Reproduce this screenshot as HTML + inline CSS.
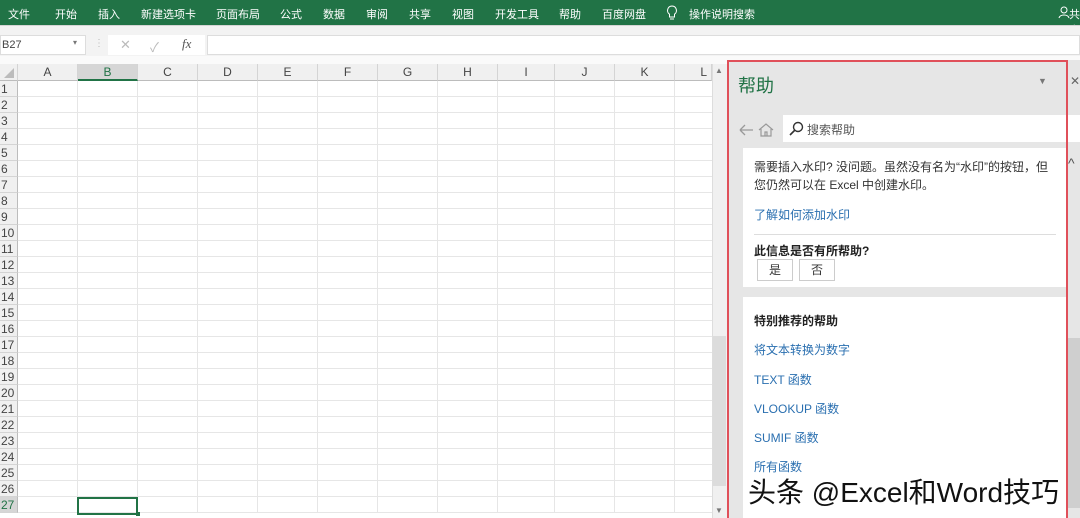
<!DOCTYPE html>
<html><head><meta charset="utf-8"><style>
*{margin:0;padding:0;box-sizing:border-box}
body{width:1080px;height:518px;overflow:hidden;background:#fff;font-family:"Liberation Sans","Noto Sans CJK SC",sans-serif;position:relative}
.abs{position:absolute}
#rib{left:0;top:0;width:1080px;height:25px;background:#217346;color:#fff;font-size:11px}
#rib span{position:absolute;top:6px}
#bar{left:0;top:25px;width:1080px;height:39px;background:#f3f3f3;border-top:1px solid #d5d5d5}
.t{font-size:11px;color:#444}
.ch{position:absolute;top:64px;height:17px;background:#f0f0f0;border-right:1px solid #d4d4d4;border-bottom:1px solid #bcbcbc;font-size:12px;color:#444;text-align:center;line-height:17px}
.rh{position:absolute;left:0;width:18px;height:16px;background:#f0f0f0;border-bottom:1px solid #d4d4d4;border-right:1px solid #bcbcbc;font-size:12px;color:#444;line-height:16px;padding-left:1px}
.cg{position:absolute;top:81px;height:432px;width:1px;background:#e6e6e6}
.rg{position:absolute;left:18px;width:694px;height:1px;background:#e6e6e6}
.lk{position:absolute;left:754px;color:#2a6fb0;font-size:12px}
</style></head><body>
<div id="rib" class="abs">
<span style="left:8px">文件</span><span style="left:55px">开始</span><span style="left:98px">插入</span><span style="left:141px">新建选项卡</span><span style="left:216px">页面布局</span><span style="left:280px">公式</span><span style="left:323px">数据</span><span style="left:366px">审阅</span><span style="left:409px">共享</span><span style="left:452px">视图</span><span style="left:495px">开发工具</span><span style="left:559px">帮助</span><span style="left:602px">百度网盘</span>
<svg class="abs" style="left:666px;top:5px" width="12" height="16"><path d="M6 1a4.5 4.5 0 0 0-2.5 8.2V12h5V9.2A4.5 4.5 0 0 0 6 1zM4 14h4" fill="none" stroke="#fff" stroke-width="1"/></svg>
<span style="left:689px">操作说明搜索</span>
<svg class="abs" style="left:1058px;top:6px" width="12" height="13"><circle cx="6" cy="4" r="3" fill="none" stroke="#fff"/><path d="M1 12c1-4 9-4 10 0" fill="none" stroke="#fff"/></svg>
<span style="left:1069px">共享</span>
</div>
<div id="bar" class="abs"></div>
<div class="abs" style="left:0;top:35px;width:86px;height:20px;background:#fff;border:1px solid #ddd"></div>
<div class="abs t" style="left:2px;top:39px">B27</div>
<div class="abs" style="left:73px;top:38px;font-size:8px;color:#777">▾</div>
<div class="abs" style="left:94px;top:38px;font-size:10px;color:#bbb">⋮</div>
<div class="abs" style="left:108px;top:35px;width:97px;height:20px;background:#fff"></div>
<div class="abs" style="left:120px;top:37px;font-size:13px;color:#bbb">✕</div>
<div class="abs" style="left:150px;top:37px;font-size:13px;color:#bbb">✓</div>
<div class="abs" style="left:182px;top:36px;font-size:13px;color:#555;font-style:italic;font-family:'Liberation Serif',serif">fx</div>
<div class="abs" style="left:207px;top:35px;width:873px;height:20px;background:#fff;border:1px solid #ddd"></div>
<div class="abs" style="left:0;top:56px;width:1080px;height:8px;background:#fafafa"></div>
<div class="ch" style="left:0;width:18px"><svg width="14" height="14" style="margin-top:2px"><path d="M12 2V12H2Z" fill="#bcbcbc"/></svg></div>
<div class="ch" style="left:18px;width:60px">A</div>
<div class="ch" style="left:78px;width:60px;background:#d6d6d6;border-bottom:2px solid #217346;color:#217346">B</div>
<div class="ch" style="left:138px;width:60px">C</div>
<div class="ch" style="left:198px;width:60px">D</div>
<div class="ch" style="left:258px;width:60px">E</div>
<div class="ch" style="left:318px;width:60px">F</div>
<div class="ch" style="left:378px;width:60px">G</div>
<div class="ch" style="left:438px;width:60px">H</div>
<div class="ch" style="left:498px;width:57px">I</div>
<div class="ch" style="left:555px;width:60px">J</div>
<div class="ch" style="left:615px;width:60px">K</div>
<div class="ch" style="left:675px;width:37px;text-align:right;padding-right:4px">L</div>
<div class="cg" style="left:77px"></div><div class="cg" style="left:137px"></div><div class="cg" style="left:197px"></div><div class="cg" style="left:257px"></div><div class="cg" style="left:317px"></div><div class="cg" style="left:377px"></div><div class="cg" style="left:437px"></div><div class="cg" style="left:497px"></div><div class="cg" style="left:554px"></div><div class="cg" style="left:614px"></div><div class="cg" style="left:674px"></div>
<div id="rows"></div>
<div class="abs" style="left:77px;top:497px;width:61px;height:18px;border:2px solid #217346"></div>
<div class="abs" style="left:136px;top:512px;width:4px;height:4px;background:#217346"></div>
<div class="abs" style="left:712px;top:64px;width:15px;height:454px;background:#f0f0f0;border-left:1px solid #ddd"></div>
<div class="abs" style="left:715px;top:66px;font-size:8px;color:#777">▲</div>
<div class="abs" style="left:713px;top:336px;width:13px;height:150px;background:#dcdcdc"></div>
<div class="abs" style="left:715px;top:506px;font-size:8px;color:#777">▼</div>
<div class="abs" style="left:727px;top:60px;width:353px;height:458px;background:#e6e6e6"></div>
<div class="abs" style="left:1068px;top:338px;width:12px;height:170px;background:#cfcfcf"></div>
<div class="abs" style="left:1068px;top:155px;font-size:14px;color:#555">^</div>
<div class="abs" style="left:1070px;top:74px;font-size:12px;color:#666">✕</div>
<div class="abs" style="left:738px;top:72px;font-size:18px;color:#217346">帮助</div>
<div class="abs" style="left:1038px;top:76px;font-size:9px;color:#777">▼</div>
<svg class="abs" style="left:738px;top:121px" width="38" height="18"><path d="M2 9H15M2 9l5-5M2 9l5 5" fill="none" stroke="#999" stroke-width="1.3"/><path d="M21 9l7-6 7 6M23 8v7h10V8M27 15v-4h2v4" fill="none" stroke="#999" stroke-width="1.2"/></svg>
<div class="abs" style="left:783px;top:115px;width:297px;height:27px;background:#fff"></div>
<svg class="abs" style="left:788px;top:121px" width="16" height="16"><circle cx="10" cy="6" r="4.5" fill="none" stroke="#333" stroke-width="1.4"/><path d="M7 9L2 14" stroke="#333" stroke-width="1.6"/></svg>
<div class="abs" style="left:807px;top:121px;font-size:12px;color:#555">搜索帮助</div>
<div class="abs" style="left:743px;top:148px;width:323px;height:139px;background:#fff"></div>
<div class="abs" style="left:754px;top:158px;font-size:12px;color:#333;line-height:18px;width:305px">需要插入水印? 没问题。虽然没有名为“水印”的按钮，但您仍然可以在 Excel 中创建水印。</div>
<div class="lk" style="top:206px">了解如何添加水印</div>
<div class="abs" style="left:754px;top:234px;width:302px;height:1px;background:#ddd"></div>
<div class="abs" style="left:754px;top:242px;font-size:12px;font-weight:bold;color:#222">此信息是否有所帮助?</div>
<div class="abs" style="left:757px;top:259px;width:36px;height:22px;border:1px solid #ccc;text-align:center;font-size:12px;line-height:20px;color:#333">是</div>
<div class="abs" style="left:799px;top:259px;width:36px;height:22px;border:1px solid #ccc;text-align:center;font-size:12px;line-height:20px;color:#333">否</div>
<div class="abs" style="left:743px;top:297px;width:323px;height:221px;background:#fff"></div>
<div class="abs" style="left:754px;top:312px;font-size:12px;font-weight:bold;color:#222">特别推荐的帮助</div>
<div class="lk" style="top:341px">将文本转换为数字</div>
<div class="lk" style="top:371px">TEXT 函数</div>
<div class="lk" style="top:400px">VLOOKUP 函数</div>
<div class="lk" style="top:429px">SUMIF 函数</div>
<div class="lk" style="top:458px">所有函数</div>
<div class="abs" style="left:727px;top:60px;width:341px;height:458px;border:2px solid #e0505a;border-bottom:none"></div>
<div class="abs" style="left:748px;top:471px;font-size:28px;color:#111;white-space:nowrap;text-shadow:1px 1px 0 #fff,-1px -1px 0 #fff,1px -1px 0 #fff,-1px 1px 0 #fff">头条 @Excel和Word技巧</div>
<script>
var h='';for(var i=1;i<=27;i++){var t=81+(i-1)*16;h+='<div class="rh" style="top:'+t+'px'+(i==27?';background:#d6d6d6;color:#217346':'')+'">'+i+'</div><div class="rg" style="top:'+(t+15)+'px"></div>';}
document.getElementById('rows').innerHTML=h;
</script>
</body></html>
